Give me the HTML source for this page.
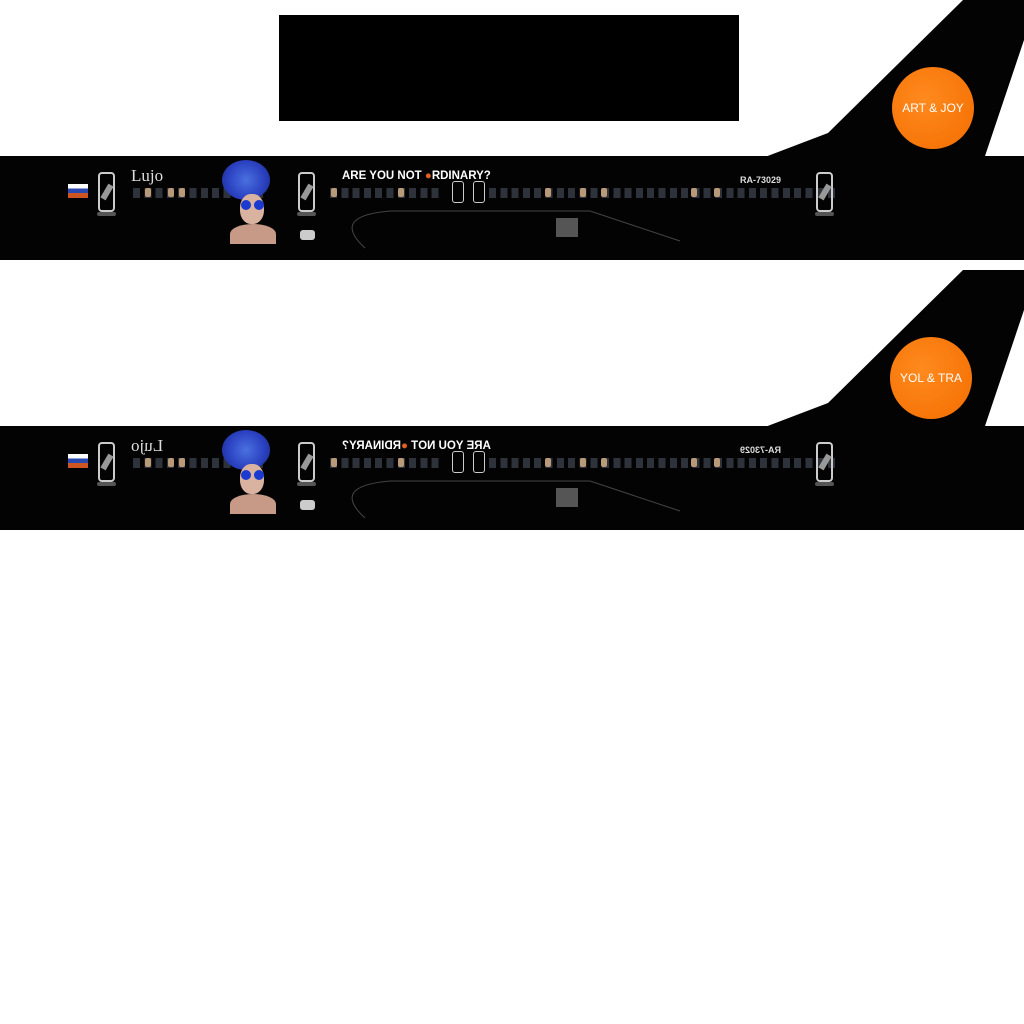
<!DOCTYPE html>
<html><head><style>
body{margin:0;width:1024px;height:1024px;background:#fff;position:relative;overflow:hidden;font-family:"Liberation Sans",sans-serif}
.a{position:absolute}
.fus{position:absolute;left:0;width:1024px;height:104px;background:#030303}
.win{position:absolute;top:32px;height:10px;background:repeating-linear-gradient(90deg,#2e333b 0 7px,transparent 7px 11.3px)}
.tan{position:absolute;top:32px;width:6px;height:9px;background:#b89a78;border-radius:2px}
.door{position:absolute;width:17px;height:40px;border:2px solid #ccc;border-radius:4px;box-sizing:border-box}
.door:after{content:"";position:absolute;left:-3px;right:-3px;bottom:-6px;height:4px;background:#555;border-radius:2px}
.door i{position:absolute;left:4px;top:10px;width:6px;height:16px;background:#999;transform:rotate(30deg)}
.flag{position:absolute;width:20px;height:14px;background:linear-gradient(#fff 0 33%,#2a4ab0 33% 66%,#c52 66%)}
.circ{position:absolute;border-radius:50%;background:radial-gradient(circle at 40% 40%,#ff8a1e,#f36d00);color:#fff;font-size:12px;display:flex;align-items:center;justify-content:center}
</style></head><body>
<div class="a" style="left:279px;top:15px;width:460px;height:106px;background:#000"></div>

<svg class="a" style="left:0;top:0" width="1024" height="540">
<polygon points="765,157 828,133 963,0 1024,0 1024,40 985,156" fill="#030303"/>
<polygon points="765,427 828,403 963,270 1024,270 1024,310 985,426" fill="#030303"/>
</svg>
<div class="circ" style="left:892px;top:67px;width:82px;height:82px">ART &amp; JOY</div>
<div class="circ" style="left:890px;top:337px;width:82px;height:82px">YOL &amp; TRA</div>

<div class="fus" style="top:156px">
  <div class="flag" style="left:68px;top:28px"></div>
  <div class="door" style="left:98px;top:16px"><i></i></div>
  <div class="a" style="left:131px;top:10px;color:#ddd;font:17px 'Liberation Serif',serif">Lujo</div>
  <div class="win" style="left:133px;width:130px"></div>
  <div class="tan" style="left:145px"></div><div class="tan" style="left:168px"></div><div class="tan" style="left:179px"></div>
  <div class="a" style="left:222px;top:4px;width:48px;height:40px;border-radius:50%;background:radial-gradient(circle,#4a70e0,#2a40c0 60%,#1a2a80)"></div>
  <div class="a" style="left:240px;top:38px;width:24px;height:30px;border-radius:45%;background:#d9b2a0"></div>
  <div class="a" style="left:230px;top:68px;width:46px;height:20px;border-radius:50% 50% 0 0;background:#c79a88"></div>
  <div class="a" style="left:241px;top:44px;width:10px;height:10px;border-radius:50%;background:#1a3ad0"></div>
  <div class="a" style="left:254px;top:44px;width:10px;height:10px;border-radius:50%;background:#1a3ad0"></div>
  <div class="door" style="left:298px;top:16px"><i></i></div>
  <div class="a" style="left:300px;top:74px;width:15px;height:10px;background:#ccc;border-radius:3px"></div>
  <div class="win" style="left:330px;width:110px"></div>
  <div class="tan" style="left:331px"></div><div class="tan" style="left:398px"></div>
  <div class="a" style="left:342px;top:14px;color:#fff;font-weight:bold;font-size:11.5px">ARE YOU NOT <span style="color:#e06020">●</span>RDINARY?</div>
  <div class="a" style="left:452px;top:25px;width:10px;height:20px;border:1px solid #ccc;border-radius:3px"></div>
  <div class="a" style="left:473px;top:25px;width:10px;height:20px;border:1px solid #ccc;border-radius:3px"></div>
  <div class="win" style="left:489px;width:346px"></div>
  <div class="tan" style="left:545px"></div><div class="tan" style="left:580px"></div><div class="tan" style="left:601px"></div><div class="tan" style="left:691px"></div><div class="tan" style="left:714px"></div>
  <div class="a" style="left:740px;top:19px;color:#ddd;font-weight:bold;font-size:9px">RA-73029</div>
  <div class="door" style="left:816px;top:16px"><i></i></div>
  <div class="a" style="left:556px;top:62px;width:22px;height:19px;background:#555"></div>
  <svg class="a" style="left:0;top:0" width="1024" height="104"><path d="M365 92 Q330 60 390 55 L590 55 L680 85" stroke="#444" fill="none"/></svg>
</div>

<div class="fus" style="top:426px">
  <div class="flag" style="left:68px;top:28px"></div>
  <div class="door" style="left:98px;top:16px"><i></i></div>
  <div class="a" style="left:131px;top:10px;color:#ddd;font:17px 'Liberation Serif',serif;transform:scaleX(-1)">Lujo</div>
  <div class="win" style="left:133px;width:130px"></div>
  <div class="tan" style="left:145px"></div><div class="tan" style="left:168px"></div><div class="tan" style="left:179px"></div>
  <div class="a" style="left:222px;top:4px;width:48px;height:40px;border-radius:50%;background:radial-gradient(circle,#4a70e0,#2a40c0 60%,#1a2a80)"></div>
  <div class="a" style="left:240px;top:38px;width:24px;height:30px;border-radius:45%;background:#d9b2a0"></div>
  <div class="a" style="left:230px;top:68px;width:46px;height:20px;border-radius:50% 50% 0 0;background:#c79a88"></div>
  <div class="a" style="left:241px;top:44px;width:10px;height:10px;border-radius:50%;background:#1a3ad0"></div>
  <div class="a" style="left:254px;top:44px;width:10px;height:10px;border-radius:50%;background:#1a3ad0"></div>
  <div class="door" style="left:298px;top:16px"><i></i></div>
  <div class="a" style="left:300px;top:74px;width:15px;height:10px;background:#ccc;border-radius:3px"></div>
  <div class="win" style="left:330px;width:110px"></div>
  <div class="tan" style="left:331px"></div><div class="tan" style="left:398px"></div>
  <div class="a" style="left:342px;top:14px;color:#fff;font-weight:bold;font-size:11.5px;transform:scaleX(-1)">ARE YOU NOT <span style="color:#e06020">●</span>RDINARY?</div>
  <div class="a" style="left:452px;top:25px;width:10px;height:20px;border:1px solid #ccc;border-radius:3px"></div>
  <div class="a" style="left:473px;top:25px;width:10px;height:20px;border:1px solid #ccc;border-radius:3px"></div>
  <div class="win" style="left:489px;width:346px"></div>
  <div class="tan" style="left:545px"></div><div class="tan" style="left:580px"></div><div class="tan" style="left:601px"></div><div class="tan" style="left:691px"></div><div class="tan" style="left:714px"></div>
  <div class="a" style="left:740px;top:19px;color:#ddd;font-weight:bold;font-size:9px;transform:scaleX(-1)">RA-73029</div>
  <div class="door" style="left:816px;top:16px"><i></i></div>
  <div class="a" style="left:556px;top:62px;width:22px;height:19px;background:#555"></div>
  <svg class="a" style="left:0;top:0" width="1024" height="104"><path d="M365 92 Q330 60 390 55 L590 55 L680 85" stroke="#444" fill="none"/></svg>
</div>
</body></html>
